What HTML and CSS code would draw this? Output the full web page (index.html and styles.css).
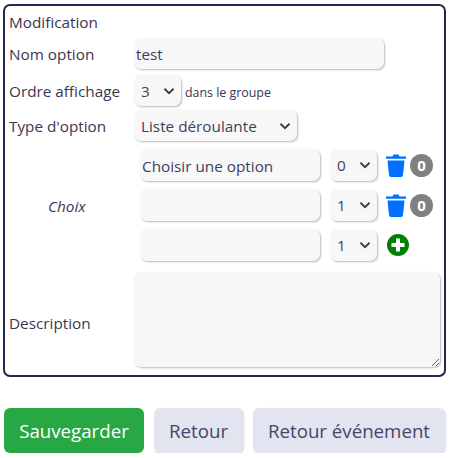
FILE: index.html
```html
<!DOCTYPE html>
<html lang="fr">
<head>
<meta charset="utf-8">
<title>Modification</title>
<link rel="stylesheet" href="styles.css">
</head>
<body>
<form class="card">
  <div class="title">Modification</div>
  <div class="row name-row">
    <label class="label">Nom option</label>
    <input class="field name-field" type="text" value="test">
  </div>
  <div class="row order-row">
    <label class="label">Ordre affichage</label>
    <div class="picker small-picker"><span>3</span><svg class="chev" viewBox="0 0 16 16"><path d="M2 5l6 6 6-6"/></svg></div>
    <span class="hint">dans le groupe</span>
  </div>
  <div class="row type-row">
    <label class="label">Type d'option</label>
    <div class="picker type-picker"><span>Liste déroulante</span><svg class="chev" viewBox="0 0 16 16"><path d="M2 5l6 6 6-6"/></svg></div>
  </div>
  <div class="choices">
    <div class="choices-label">Choix</div>
    <div class="choice-list">
      <div class="choice">
        <div class="field choice-field">Choisir une option</div>
        <div class="picker small-picker"><span>0</span><svg class="chev" viewBox="0 0 16 16"><path d="M2 5l6 6 6-6"/></svg></div>
        <svg class="trash" viewBox="0 0 20 23"><path d="M0 2.500h6.500L7.500 0.500h5l1 2H20v2.200H0zM1.500 6.500h17L17 21a2 2 0 0 1-2 2H5a2 2 0 0 1-2-2z"/></svg>
        <span class="count">0</span>
      </div>
      <div class="choice">
        <div class="field choice-field"></div>
        <div class="picker small-picker"><span>1</span><svg class="chev" viewBox="0 0 16 16"><path d="M2 5l6 6 6-6"/></svg></div>
        <svg class="trash" viewBox="0 0 20 23"><path d="M0 2.500h6.500L7.500 0.500h5l1 2H20v2.200H0zM1.500 6.500h17L17 21a2 2 0 0 1-2 2H5a2 2 0 0 1-2-2z"/></svg>
        <span class="count">0</span>
      </div>
      <div class="choice">
        <div class="field choice-field"></div>
        <div class="picker small-picker"><span>1</span><svg class="chev" viewBox="0 0 16 16"><path d="M2 5l6 6 6-6"/></svg></div>
        <svg class="plus" viewBox="0 0 22 22"><circle cx="11" cy="11" r="11"/><path d="M9 4.500h4V9h4.500v4H13v4.500H9V13H4.500V9H9z"/></svg>
      </div>
    </div>
  </div>
  <div class="row desc-row">
    <label class="label desc-label">Description</label>
    <textarea class="field desc-field"></textarea>
  </div>
</form>
<div class="actions">
  <button class="btn btn-save" type="button">Sauvegarder</button>
  <button class="btn btn-back" type="button">Retour</button>
  <button class="btn btn-event" type="button">Retour événement</button>
</div>
</body>
</html>
```
FILE: styles.css
```css
* { box-sizing: border-box; }
html, body { margin: 0; background: #fff; }
body {
  padding: 4px 3px 0;
  font-family: "Open Sans", "Noto Sans", sans-serif;
  font-size: 15.3px;
  color: #3a3a5a;
}
.card {
  width: 443px;
  height: 373px;
  border: 2px solid #2b2350;
  border-radius: 7px;
  padding: 0 2px 0 4px;
  display: flex;
  flex-direction: column;
}
.title { height: 32px; padding-bottom: 1px; display: flex; align-items: center; line-height: 20px; color: #3b3650; }
.row { display: flex; align-items: center; }
.label { width: 125px; flex: none; color: #3b3650; }
.order-row { margin-top: 6px; }
.type-row { margin-top: 4px; }
.field {
  display: block;
  border: 0;
  border-radius: 7px;
  background: #f7f7f7;
  box-shadow: 1px 1px 2px rgba(0,0,0,.28);
  font: inherit;
  color: #3f3f60;
  outline: 0;
}
.name-field { width: 250px; height: 31px; padding: 0 2px; }
.picker {
  display: flex;
  align-items: center;
  justify-content: space-between;
  height: 31px;
  border-radius: 7px;
  background: #f7f7f7;
  box-shadow: 1px 1px 2px rgba(0,0,0,.28);
  color: #3f3f60;
  padding: 0 6px 0 7px;
}
.small-picker { width: 47px; }
.type-picker { width: 163px; }
.chev { width: 12px; height: 12px; fill: none; stroke: #343a4f; stroke-width: 2.4; }
.hint { font-size: 12.4px; margin-left: 4px; margin-top: 3px; color: #3b3650; }
.choices { display: flex; margin-top: 8px; }
.choices-label { width: 131px; flex: none; display: flex; align-items: center; padding-left: 39px; padding-top: 2px; font-style: italic; color: #3b3650; }
.choice-list { display: flex; flex-direction: column; gap: 8px; }
.choice { display: flex; align-items: center; height: 32px; }
.choice-field { width: 180px; height: 32px; line-height: 34px; padding: 0 2px; margin-right: 10px; }
.trash { width: 20px; height: 23px; margin-left: 9px; fill: #006eff; }
.count {
  width: 23px; height: 23px; margin-left: 4px; border-radius: 50%;
  background: #808080; color: #fff; font-weight: 700; font-size: 15px;
  display: flex; align-items: center; justify-content: center;
}
.plus { width: 22px; height: 22px; margin-left: 10px; fill: #008000; }
.plus path { fill: #fff; }
.desc-row { margin-top: 11px; }
.desc-label { padding-top: 6px; }
.desc-field { width: 306px; height: 95px; padding: 2px; resize: both; }
.actions { display: flex; gap: 10px; margin-top: 31px; padding-left: 1px; }
.btn {
  height: 45px;
  border: 0;
  border-radius: 6px;
  font: inherit;
  font-size: 18.7px;
  padding: 0;
}
.btn-save { width: 140px; background: #28a745; color: #fff; }
.btn-back { width: 89px; background: #e2e5ef; color: #45456a; box-shadow: 1px 1px 2px rgba(0,0,0,.15); }
.btn-event { width: 192px; background: #e2e5ef; color: #45456a; box-shadow: 1px 1px 2px rgba(0,0,0,.15); }
```
